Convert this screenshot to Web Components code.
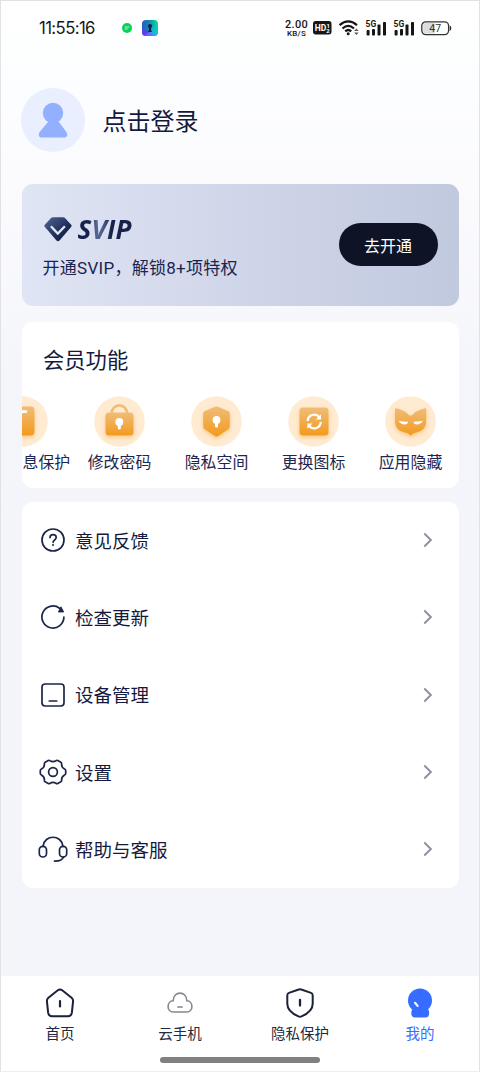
<!DOCTYPE html>
<html lang="zh-CN">
<head>
<meta charset="utf-8">
<title>我的</title>
<style>
html,body{margin:0;padding:0}
body{width:480px;height:1072px;overflow:hidden;font-family:"Noto Sans CJK SC",sans-serif;color:#131a3e}
</style>
</head>
<body>
<profile-page></profile-page>
<script>
const GRAD = '<defs><linearGradient id="o" x1="0" y1="0" x2="0" y2="1"><stop offset="0" stop-color="#efbd78"/><stop offset="1" stop-color="#f49a1d"/></linearGradient><filter id="s" x="-40%" y="-40%" width="180%" height="190%"><feDropShadow dx="0" dy="2" stdDeviation="2" flood-color="#f8ad48" flood-opacity=".55"/></filter></defs>';
const disc = body => GRAD + '<circle cx="25.5" cy="25.5" r="25.3" fill="#ffebd2"/>' + body;
const ICONS = {
  avatar: [64, 64, '<circle cx="32" cy="32" r="32" fill="#e9efff"/><g fill="#93b0ff"><circle cx="32" cy="25" r="10.2"/><path d="M27.5 32h9L45 43.5c2.4 3.2 1.2 6.1-2 6.1H21c-3.2 0-4.400-2.900-2-6.100L27 34z"/></g>'],
  message: [10, 10, '<circle cx="5" cy="5" r="5" fill="#08d158"/><path d="M2.700 4h4.600M2.700 6h3" stroke="#b5f3cd" fill="none"/>'],
  app: [16, 16, '<defs><linearGradient id="a" x1="0" y1="0" x2="1" y2="0"><stop offset="0" stop-color="#225fc4"/><stop offset=".45" stop-color="#1685b7"/><stop offset="1" stop-color="#00e88d"/></linearGradient><linearGradient id="b"><stop offset="0" stop-color="#7a35fb"/><stop offset="1" stop-color="#39b0fa"/></linearGradient><clipPath id="c"><rect width="16" height="16" rx="4"/></clipPath></defs><g clip-path="url(#c)"><rect width="16" height="16" fill="url(#a)"/><path d="M16 5v11H8V12l3-5z" fill="#12bde0" opacity=".7"/><path d="M0 15l8-3 8 3v1H0z" fill="url(#b)"/><path d="M0 9l7 3-7 4z" fill="#6a35f0"/></g><circle cx="8" cy="6" r="2.100" fill="#132044"/><path d="M7 7h2v3l1 2H6l1-2z" fill="#132044"/>'],
  wifi: [20, 16, '<g fill="none" stroke="#161616" stroke-width="2.200"><path d="M.6 5.200Q9.200 -2.300 18 5.200"/><path d="M3.500 8.500Q9.200 3.400 15 8.500"/><path d="M6.200 11.400Q9.200 8.600 12.200 11.400"/></g><circle cx="9.200" cy="13.800" r="1.500" fill="#161616"/><path d="M15.200 11l2.200-2.600L19.600 11zM15.200 12.500l2.200 2.600 2.200-2.600z" fill="#555"/>'],
  signal: [22, 17, '<g fill="#161616"><rect x="1.600" y="10" width="3" height="5.500" rx=".8"/><rect x="7" y="9" width="3" height="6.500" rx=".8"/><rect x="12.500" y="4.500" width="3" height="11" rx=".8"/><rect x="18" y="2" width="3" height="13.500" rx=".8"/></g><text x=".6" y="7.300" font-family="Roboto,sans-serif" font-weight="700" font-size="9.300" fill="#161616" stroke="#fff" stroke-width="1.200" paint-order="stroke" textLength="10.600" lengthAdjust="spacingAndGlyphs">5G</text>'],
  battery: [31, 15, '<rect x=".8" y=".8" width="26.800" height="12.800" rx="4" fill="#fff" stroke="#333" stroke-width="1.300"/><path d="M5.500 2h8.500v10.400H5.500q-3.300 0-3.300-3V5q0-3 3.300-3" fill="#ddd"/><path d="M28.700 4.500q1.600 0 1.600 2.700t-1.600 2.700z" fill="#333"/><text x="14.200" y="10.900" text-anchor="middle" font-family="Roboto,sans-serif" font-size="10.500" fill="#303030">47</text>'],
  hd: [19, 14, '<rect width="18.500" height="13.500" rx="2.700" fill="#161616"/><g fill="#fff" font-family="Roboto,sans-serif" font-weight="700"><text x="1.700" y="10.300" font-size="9.600" textLength="11.500" lengthAdjust="spacingAndGlyphs">HD</text><text x="13.600" y="6.800" font-size="6">1</text><text x="13.300" y="12.300" font-size="6">2</text></g>'],
  gem: [28, 25, '<defs><linearGradient id="g" x1="0" y1="0" x2="1" y2="1"><stop offset="0" stop-color="#526596"/><stop offset=".65" stop-color="#1b2852"/><stop offset="1" stop-color="#121b3e"/></linearGradient></defs><path d="M7.300.8Q8 .2 9 .2h10q1 0 1.700.6l6.500 6.900q.8 1 .1 2L15.500 23.500q-1.500 1.600-3 0L.7 9.700q-.7-1 .1-2z" fill="url(#g)"/><path d="M6.900 9.300l6.900 7.200 7.100-7.200" stroke="#e3e8f5" stroke-width="2.300" fill="none"/>'],
  card: [51, 51, disc('<rect x="9" y="10.500" width="28.500" height="29" rx="4" fill="url(#o)" filter="url(#s)"/><path d="M15 15.600h14" stroke="#fff" stroke-width="2.600" stroke-linecap="round"/>')],
  lock: [51, 51, disc('<path d="M17.700 18v-1a7.600 7.600 0 0 1 15.200 0v1" fill="none" stroke="#efbd78" stroke-width="2.800"/><rect x="11.500" y="16.500" width="28" height="23" rx="3.500" fill="url(#o)" filter="url(#s)"/><circle cx="25.300" cy="26" r="4" fill="#fff"/><path d="M25.300 27v5" stroke="#fff" stroke-width="3" stroke-linecap="round"/>')],
  shield: [51, 51, disc('<path d="M25.500 10.500q1 0 2 .4L37 15q1.800.8 1.800 2.500v13q0 1.700-1.500 2.700l-10 6.800q-1.800 1.200-3.600 0l-10-6.800q-1.500-1-1.500-2.700v-13q0-1.700 1.800-2.500l9.500-4.100q1-.4 2-.4" fill="url(#o)" filter="url(#s)"/><circle cx="25.500" cy="24" r="3.900" fill="#fff"/><path d="M25.500 25v5" stroke="#fff" stroke-width="3" stroke-linecap="round"/>')],
  swap: [51, 51, disc('<rect x="11.500" y="11.500" width="29" height="28" rx="3.500" fill="url(#o)" filter="url(#s)"/><g fill="none" stroke="#fff" stroke-width="2.300"><path d="M19.700 25a6.500 6.500 0 0 1 11.500-4"/><path d="M32.700 26a6.500 6.500 0 0 1-11.500 4"/></g><path d="M33 18.300v5.200h-5.200zM19.400 32.700v-5.200h5.200z" fill="#fff"/>')],
  fox: [51, 51, disc('<path d="M10 13.500q0-1.600 1.400-1.200 5 1 9 3.500l3.500 3.200q1.700 1.200 3.400 0l3.500-3.200q4-2.500 9-3.500 1.400-.4 1.400 1.200V25q0 7-5.500 10-3 1.500-7.200 2.200l-2.800 2.500-2.800-2.500Q18.500 36.500 15.500 35 10 32 10 25z" fill="url(#o)" filter="url(#s)"/><path d="M13.400 24.700q5 1 9.500 1.100 0 2.600-3.600 2.600-3.500-.2-5.900-3.700M38 24.700q-5 1-9.500 1.100 0 2.600 3.600 2.600 3.500-.2 5.900-3.700" fill="#fff"/>')],
  help: [28, 28, '<g fill="none" stroke="#1c2549" stroke-width="1.700" stroke-linecap="round"><circle cx="14" cy="14" r="11"/><path d="M11 11.600c0-3.900 6.200-3.900 6.200 0 0 2.400-3.100 2.300-3.100 4.700"/></g><circle cx="14" cy="19.100" r="1" fill="#1c2549"/>'],
  update: [28, 28, '<path d="M24.900 14A11 11 0 1 1 20.500 5.200" fill="none" stroke="#1c2549" stroke-width="1.700" stroke-linecap="round"/><path d="M22 3.800l2.700 5.200h-5.400z" fill="#1c2549" stroke="#1c2549" stroke-width=".8" stroke-linejoin="round"/>'],
  device: [28, 28, '<g fill="none" stroke="#1c2549" stroke-width="1.700" stroke-linecap="round"><rect x="3" y="3" width="22" height="22" rx="3.200"/><path d="M10.300 20h7.400"/></g>'],
  gear: [28, 28, '<g fill="none" stroke="#1c2549" stroke-width="1.700" stroke-linejoin="round"><path d="M9.200 2.500q1-.5 1.800.2 3 1.700 6 0 .8-.7 1.800-.2l3 1.700q.9.600.8 1.600-.2 3.500 3 5.200 1.100.5 1.100 1.500v3q0 1-1.100 1.500-3.200 1.700-3 5.200.1 1-.8 1.600l-3 1.700q-1 .5-1.800-.2-3-1.700-6 0-.8.700-1.800.2l-3-1.700q-.9-.6-.8-1.600.2-3.500-3-5.200-1.100-.5-1.100-1.500v-3q0-1 1.100-1.500 3.200-1.700 3-5.200-.1-1 .8-1.600z"/><circle cx="14" cy="14" r="4.400"/></g>'],
  headset: [30, 28, '<g fill="none" stroke="#1c2549" stroke-width="1.700" stroke-linecap="round"><rect x="1.300" y="11.300" width="7.200" height="10.700" rx="3.500"/><rect x="21.500" y="11.300" width="7.200" height="10.700" rx="3.500"/><path d="M5 11.300C6.500 -.8 23.500 -.8 25 11.300M25.500 22c-1 3-4 4.200-9 4.100"/></g>'],
  chevron: [12, 18, '<path d="M2.300 2.500l6.600 6.500-6.600 6.500" fill="none" stroke="#8c909f" stroke-width="1.900"/>'],
  home: [32, 32, '<g fill="none" stroke="#1b2237" stroke-width="2" stroke-linecap="round" stroke-linejoin="round"><path d="M13.800 3.300q2.200-1.700 4.400 0l9.400 7.400q1.700 1.400 1.500 3.500L27.900 25.400q-.5 3.800-4 3.800H8.100q-3.500 0-4-3.800L2.900 14.200q-.2-2.100 1.500-3.500z"/><path d="M16 14v5.500" stroke-width="2.200"/></g>'],
  cloud: [32, 32, '<g fill="none" stroke="#85868f" stroke-width="1.600" stroke-linecap="round"><path d="M9.500 25h13c7.300 0 7-11 .3-11.200C22.800 3.500 9.200 3.500 9.200 13.800 2.500 14 2.200 25 9.500 25z"/><path d="M13.800 20h4.400"/></g>'],
  guard: [32, 32, '<g fill="none" stroke="#1b2237" stroke-width="2" stroke-linecap="round" stroke-linejoin="round"><path d="M14.700 2.500q1.300-.5 2.600 0l9.700 3.400q1.700.6 1.700 2.500v8.300c0 6-5.400 10.200-11.200 12.700q-1.500.6-3 0C8.700 26.900 3.300 22.700 3.300 16.700V8.400q0-1.900 1.700-2.500z"/><path d="M16 13v5.500" stroke-width="2.300"/></g>'],
  me: [32, 32, '<circle cx="16" cy="13.500" r="12" fill="#366cff"/><rect x="7.300" y="21.500" width="17.800" height="9" rx="4" fill="#366cff"/><path d="M11 15.800l2.600 3.100" stroke="#fff" stroke-width="2.200" stroke-linecap="round"/>']
};
class Base extends HTMLElement {
  render(css, html) { this.attachShadow({mode: 'open'}).innerHTML = `<style>*{box-sizing:border-box}${css}</style>${html}`; }
}
customElements.define('ui-icon', class extends Base {
  connectedCallback() {
    if (this.shadowRoot) return;
    const [w, h, art] = ICONS[this.getAttribute('name')];
    this.render(`:host{display:block;flex:none;width:${w}px;height:${h}px}svg{display:block;overflow:visible}`,
      `<svg width="${w}" height="${h}" viewBox="0 0 ${w} ${h}">${art}</svg>`);
  }
});
customElements.define('status-bar', class extends Base {
  connectedCallback() {
    this.render(`:host{display:flex;height:55px;align-items:center;padding:0 27px 1px 38px;font-family:Roboto,sans-serif;color:#161616}
      .time{font:400 16.700px/20px Inter,sans-serif;letter-spacing:-.6px;width:83px;white-space:nowrap}
      .app{margin-left:9.500px}.speed{margin-left:auto;width:26px;text-align:center;line-height:11px;font-size:11px;letter-spacing:.25px;font-weight:500;white-space:nowrap;padding-top:1px}
      .speed small{display:block;font-size:8px;line-height:8px}.hd{margin-left:3px}.wifi{margin-left:7.500px}.s1{margin-left:6px}.s2{margin-left:6px}.bat{margin-left:6px}`,
      `<span class="time">11:55:16</span><ui-icon name="message"></ui-icon><ui-icon class="app" name="app"></ui-icon>
      <span class="speed">2.00<small>KB/S</small></span><ui-icon class="hd" name="hd"></ui-icon><ui-icon class="wifi" name="wifi"></ui-icon>
      <ui-icon class="s1" name="signal"></ui-icon><ui-icon class="s2" name="signal"></ui-icon><ui-icon class="bat" name="battery"></ui-icon>`);
  }
});
customElements.define('login-header', class extends Base {
  connectedCallback() {
    this.render(`:host{display:flex;align-items:center;gap:17px;height:64px;margin:32px 0 0 20.400px;font-size:24px;line-height:36px}`,
      `<ui-icon name="avatar"></ui-icon><span><slot></slot></span>`);
  }
});
customElements.define('svip-banner', class extends Base {
  connectedCallback() {
    this.render(`:host{display:flex;align-items:center;justify-content:space-between;height:121.500px;margin:32px 20px 0 20.500px;padding:0 21.500px 0 22px;border-radius:11px;background:linear-gradient(90deg,#dfe5f4,#d0d6e9 50%,#c1c9df)}
      .left{padding-top:5px}
      .brand{display:flex;align-items:center;gap:6px;height:28px}
      .name{font:italic 700 26px/28px "Open Sans",sans-serif;letter-spacing:.2px;padding-right:3px;background:linear-gradient(90deg,#16224c 20%,#53658f 32%,#4c5c88 44%,#17224a 58%,#17224a);-webkit-background-clip:text;color:transparent}
      .brand ui-icon{margin-top:1px}
      .sub{font-family:Roboto,"Noto Sans CJK SC",sans-serif;font-size:17px;letter-spacing:.28px;line-height:24px;margin:13px 0 0 -1px;white-space:nowrap;color:#1a2450}
      .btn{width:99px;height:43px;border-radius:22px;background:#0e1326;color:#fff;font-size:16px;line-height:44px;text-align:center}`,
      `<div class="left"><div class="brand"><ui-icon name="gem"></ui-icon><span class="name">SVIP</span></div><div class="sub"><slot></slot></div></div><div class="btn">去开通</div>`);
  }
});
customElements.define('feature-item', class extends Base {
  connectedCallback() {
    this.render(`:host{display:flex;flex-direction:column;align-items:center;flex:none;width:97px;font-size:15.900px;line-height:24px;white-space:nowrap;color:#1c2650}.t{margin-top:3px;width:max-content}`,
      `<ui-icon name="${this.getAttribute('icon')}"></ui-icon><span class="t"><slot></slot></span>`);
  }
});
customElements.define('feature-card', class extends Base {
  connectedCallback() {
    this.render(`:host{display:block;height:166.500px;margin:16px 20px 0 20.500px;background:#fff;border-radius:11px;overflow:hidden}
      h2{margin:0;padding:21px 0 0 21.500px;font-size:21.300px;line-height:32px;font-weight:400}.row{display:flex;margin:21.500px 0 0 -47.500px}`,
      `<h2>会员功能</h2><div class="row"><slot></slot></div>`);
  }
});
customElements.define('menu-row', class extends Base {
  connectedCallback() {
    this.render(`:host{display:flex;align-items:center;flex:1;padding:0 25px 0 16.400px;font-size:18.500px;line-height:28px}
      .ic{width:30px;display:flex;justify-content:center}.t{margin:0 0 .5px 7px;flex:1}`,
      `<span class="ic"><ui-icon name="${this.getAttribute('icon')}"></ui-icon></span><span class="t"><slot></slot></span><ui-icon name="chevron"></ui-icon>`);
  }
});
customElements.define('menu-card', class extends Base {
  connectedCallback() {
    this.render(`:host{display:flex;flex-direction:column;height:386.500px;margin:13.500px 20px 0 20.500px;background:#fff;border-radius:11px}`, `<slot></slot>`);
  }
});
customElements.define('tab-item', class extends Base {
  connectedCallback() {
    this.render(`:host{display:flex;flex-direction:column;align-items:center;flex:1;font-size:14.500px;line-height:22px;color:#222940}:host([active]){color:#366cff}span{margin-top:3px}`,
      `<ui-icon name="${this.getAttribute('icon')}"></ui-icon><span><slot></slot></span>`);
  }
});
customElements.define('tab-bar', class extends Base {
  connectedCallback() {
    this.render(`:host{display:flex;flex-direction:column;align-items:center;margin-top:auto;height:95px;background:#fff;padding-top:11px}
      .tabs{display:flex;width:480px}.pill{width:160px;height:5.500px;border-radius:3px;background:#808080;margin-top:13px}`,
      `<div class="tabs"><slot></slot></div><div class="pill"></div>`);
  }
});
customElements.define('profile-page', class extends Base {
  connectedCallback() {
    this.render(`:host{display:flex;flex-direction:column;width:480px;height:1072px;box-sizing:border-box;border:1px solid #e2e2e2;border-bottom-color:#eee;background:linear-gradient(180deg,#fff 0,#fdfefe 60px,#fbfbfe 180px,#f5f6fb 360px,#f4f5fa 600px,#f3f5fa)}`,
      `<status-bar></status-bar>
      <login-header>点击登录</login-header>
      <svip-banner>开通SVIP，解锁8+项特权</svip-banner>
      <feature-card>
        <feature-item icon="card">个人信息保护</feature-item><feature-item icon="lock">修改密码</feature-item><feature-item icon="shield">隐私空间</feature-item><feature-item icon="swap">更换图标</feature-item><feature-item icon="fox">应用隐藏</feature-item>
      </feature-card>
      <menu-card>
        <menu-row icon="help">意见反馈</menu-row><menu-row icon="update">检查更新</menu-row><menu-row icon="device">设备管理</menu-row><menu-row icon="gear">设置</menu-row><menu-row icon="headset">帮助与客服</menu-row>
      </menu-card>
      <tab-bar>
        <tab-item icon="home">首页</tab-item><tab-item icon="cloud">云手机</tab-item><tab-item icon="guard">隐私保护</tab-item><tab-item icon="me" active>我的</tab-item>
      </tab-bar>`);
  }
});
</script>
</body>
</html>
